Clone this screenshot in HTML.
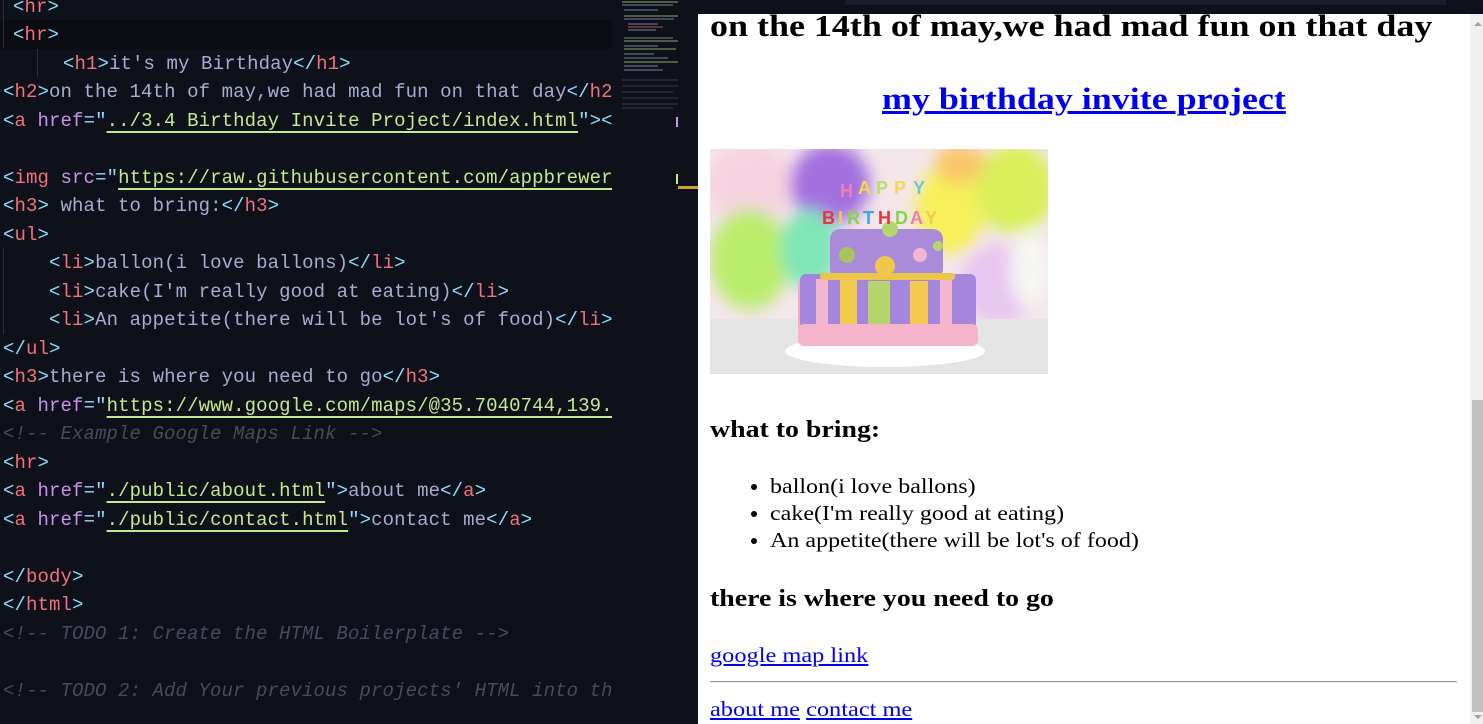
<!DOCTYPE html>
<html><head><meta charset="utf-8"><style>
*{margin:0;padding:0;box-sizing:border-box}
body{width:1483px;height:724px;overflow:hidden;background:#0f111a;position:relative;font-family:"Liberation Mono",monospace}
.l{position:absolute;left:3px;font-size:19px;letter-spacing:0.1px;line-height:28px;height:28px;color:#a6accd;white-space:pre}
.t{color:#f07178}.b{color:#89ddff}.a{color:#c792ea}.s{color:#c3e88d;text-decoration:underline;text-decoration-color:#c3e88d;text-underline-offset:5px;text-decoration-thickness:2px}
.c{color:#464b5d;font-style:italic}
#pv{position:absolute;left:698px;top:14px;width:772px;height:710px;background:#fff;font-family:"Liberation Serif",serif;color:#000;overflow:hidden}
#pv .p{position:absolute;white-space:nowrap}
.sx{transform:scaleX(1.16);transform-origin:0 0}
.sl{transform:scaleX(1.145);transform-origin:0 0;display:inline-block}
a{color:#0000ee}
</style></head><body>
<div style="position:absolute;left:0;top:20px;width:612px;height:29px;background:#0a0c12"></div>
<div style="position:absolute;left:3px;top:0;width:1px;height:48px;background:#2a2e3c"></div>
<div style="position:absolute;left:37px;top:49px;width:1px;height:28px;background:#2a2e3c"></div>
<div style="position:absolute;left:3px;top:248px;width:1px;height:86px;background:#2a2e3c"></div>
<div class="l" style="top:-7px;left:13px"><span class="b">&lt;</span><span class="t">hr</span><span class="b">&gt;</span></div>
<div class="l" style="top:21px;left:13px"><span class="b">&lt;</span><span class="t">hr</span><span class="b">&gt;</span></div>
<div class="l" style="top:50px;left:63px"><span class="b">&lt;</span><span class="t">h1</span><span class="b">&gt;</span>it's my Birthday<span class="b">&lt;/</span><span class="t">h1</span><span class="b">&gt;</span></div>
<div class="l" style="top:78px"><span class="b">&lt;</span><span class="t">h2</span><span class="b">&gt;</span>on the 14th of may,we had mad fun on that day<span class="b">&lt;/</span><span class="t">h2</span></div>
<div class="l" style="top:107px"><span class="b">&lt;</span><span class="t">a</span> <span class="a">href</span><span class="b">="</span><span class="s">../3.4 Birthday Invite Project/index.html</span><span class="b">"&gt;&lt;</span></div>
<div class="l" style="top:164px"><span class="b">&lt;</span><span class="t">img</span> <span class="a">src</span><span class="b">="</span><span class="s">https://raw.githubusercontent.com/appbrewer</span></div>
<div class="l" style="top:192px"><span class="b">&lt;</span><span class="t">h3</span><span class="b">&gt;</span> what to bring:<span class="b">&lt;/</span><span class="t">h3</span><span class="b">&gt;</span></div>
<div class="l" style="top:221px"><span class="b">&lt;</span><span class="t">ul</span><span class="b">&gt;</span></div>
<div class="l" style="top:249px">    <span class="b">&lt;</span><span class="t">li</span><span class="b">&gt;</span>ballon(i love ballons)<span class="b">&lt;/</span><span class="t">li</span><span class="b">&gt;</span></div>
<div class="l" style="top:278px">    <span class="b">&lt;</span><span class="t">li</span><span class="b">&gt;</span>cake(I'm really good at eating)<span class="b">&lt;/</span><span class="t">li</span><span class="b">&gt;</span></div>
<div class="l" style="top:306px">    <span class="b">&lt;</span><span class="t">li</span><span class="b">&gt;</span>An appetite(there will be lot's of food)<span class="b">&lt;/</span><span class="t">li</span><span class="b">&gt;</span></div>
<div class="l" style="top:335px"><span class="b">&lt;/</span><span class="t">ul</span><span class="b">&gt;</span></div>
<div class="l" style="top:363px"><span class="b">&lt;</span><span class="t">h3</span><span class="b">&gt;</span>there is where you need to go<span class="b">&lt;/</span><span class="t">h3</span><span class="b">&gt;</span></div>
<div class="l" style="top:392px"><span class="b">&lt;</span><span class="t">a</span> <span class="a">href</span><span class="b">="</span><span class="s">https://www.google.com/maps/@35.7040744,139.</span></div>
<div class="l c" style="top:420px">&lt;!-- Example Google Maps Link --&gt;</div>
<div class="l" style="top:449px"><span class="b">&lt;</span><span class="t">hr</span><span class="b">&gt;</span></div>
<div class="l" style="top:477px"><span class="b">&lt;</span><span class="t">a</span> <span class="a">href</span><span class="b">="</span><span class="s">./public/about.html</span><span class="b">"&gt;</span>about me<span class="b">&lt;/</span><span class="t">a</span><span class="b">&gt;</span></div>
<div class="l" style="top:506px"><span class="b">&lt;</span><span class="t">a</span> <span class="a">href</span><span class="b">="</span><span class="s">./public/contact.html</span><span class="b">"&gt;</span>contact me<span class="b">&lt;/</span><span class="t">a</span><span class="b">&gt;</span></div>
<div class="l" style="top:563px"><span class="b">&lt;/</span><span class="t">body</span><span class="b">&gt;</span></div>
<div class="l" style="top:591px"><span class="b">&lt;/</span><span class="t">html</span><span class="b">&gt;</span></div>
<div class="l c" style="top:620px">&lt;!-- TODO 1: Create the HTML Boilerplate --&gt;</div>
<div class="l c" style="top:677px;width:609px;overflow:hidden">&lt;!-- TODO 2: Add Your previous projects' HTML into th</div>
<div style="position:absolute;left:612px;top:0;width:86px;height:724px;background:#0f111a"></div>
<svg style="position:absolute;left:618px;top:0" width="80" height="200">
<g stroke-width="1" opacity=".7">
<line x1="4" y1="2" x2="60" y2="2" stroke="#c3e88d"/><line x1="4" y1="5" x2="55" y2="5" stroke="#a6accd"/>
<line x1="6" y1="10" x2="40" y2="10" stroke="#a6accd"/><line x1="6" y1="16" x2="60" y2="16" stroke="#c3e88d"/>
<line x1="6" y1="19" x2="56" y2="19" stroke="#a6accd"/><line x1="10" y1="24" x2="40" y2="24" stroke="#a6accd"/>
<line x1="10" y1="27" x2="45" y2="27" stroke="#f07178"/><line x1="10" y1="30" x2="38" y2="30" stroke="#a6accd"/>
<line x1="6" y1="38" x2="55" y2="38" stroke="#a6accd"/><line x1="6" y1="41" x2="60" y2="41" stroke="#c3e88d"/>
<line x1="6" y1="46" x2="40" y2="46" stroke="#a6accd"/><line x1="6" y1="49" x2="58" y2="49" stroke="#c3e88d"/>
<line x1="6" y1="54" x2="36" y2="54" stroke="#a6accd"/><line x1="6" y1="58" x2="50" y2="58" stroke="#a6accd"/>
<line x1="6" y1="62" x2="60" y2="62" stroke="#c3e88d"/><line x1="6" y1="66" x2="40" y2="66" stroke="#a6accd"/>
<line x1="6" y1="70" x2="45" y2="70" stroke="#a6accd"/><line x1="4" y1="80" x2="60" y2="80" stroke="#464b5d"/>
<line x1="4" y1="86" x2="60" y2="86" stroke="#464b5d"/><line x1="4" y1="92" x2="55" y2="92" stroke="#464b5d"/>
<line x1="4" y1="98" x2="60" y2="98" stroke="#464b5d"/><line x1="4" y1="104" x2="60" y2="104" stroke="#464b5d"/>
<line x1="4" y1="108" x2="55" y2="108" stroke="#464b5d"/></g>
<rect x="58" y="117" width="2" height="10" fill="#c792ea"/><rect x="58" y="174" width="2" height="10" fill="#c3e88d"/>
<rect x="60" y="186" width="20" height="3" fill="#c9a227"/></svg>
<div style="position:absolute;left:845px;top:0;width:601px;height:5px;background:#1b1e28"></div>
<div id="pv">
<div class="p sx" style="left:12px;top:-6px;font-size:31px;font-weight:bold">on the 14th of may,we had mad fun on that day</div>
<div class="p" style="left:184px;top:67px;font-size:31px;font-weight:bold;transform:scaleX(1.16);transform-origin:0 0"><a href="#">my birthday invite project</a></div>
<svg class="p" style="left:12px;top:135px" width="338" height="225" viewBox="0 0 338 225">
<defs><filter id="bl"><feGaussianBlur stdDeviation="8"/></filter></defs>
<rect width="338" height="225" fill="#f3e6ea"/>
<g filter="url(#bl)">
<ellipse cx="40" cy="35" rx="45" ry="40" fill="#f6d3e0"/>
<ellipse cx="120" cy="35" rx="40" ry="40" fill="#a36fe0"/>
<ellipse cx="40" cy="110" rx="40" ry="50" fill="#b9ec6a"/>
<ellipse cx="240" cy="60" rx="35" ry="45" fill="#f7f05a"/>
<ellipse cx="305" cy="40" rx="40" ry="45" fill="#d9f05a"/>
<ellipse cx="290" cy="135" rx="40" ry="40" fill="#e8c6f0"/>
<ellipse cx="100" cy="100" rx="30" ry="40" fill="#7fe6b8"/>
<ellipse cx="320" cy="120" rx="20" ry="40" fill="#f6f6f2"/>
<ellipse cx="250" cy="15" rx="25" ry="20" fill="#f9c56a"/>
</g>
<rect y="170" width="338" height="55" fill="#e4e4e4"/>
<ellipse cx="175" cy="202" rx="100" ry="16" fill="#fff"/>
<rect x="88" y="128" width="178" height="60" rx="8" fill="#f2acc6"/>
<rect x="90" y="125" width="176" height="55" rx="6" fill="#a487dc"/>
<rect x="130" y="130" width="17" height="50" fill="#f4c94f"/><rect x="158" y="132" width="22" height="50" fill="#b5d66d"/>
<rect x="200" y="132" width="18" height="50" fill="#f4c94f"/><rect x="106" y="130" width="12" height="48" fill="#f2b6cf"/><rect x="230" y="130" width="12" height="48" fill="#f2b6cf"/>
<rect x="88" y="175" width="180" height="22" rx="6" fill="#f5b4cc"/>
<rect x="120" y="80" width="113" height="50" rx="10" fill="#a98bd9"/>
<rect x="110" y="124" width="135" height="7" rx="3" fill="#eac64a"/>
<circle cx="137" cy="106" r="8" fill="#a9c361"/><circle cx="175" cy="117" r="10" fill="#eec84b"/><circle cx="210" cy="106" r="7" fill="#f3b5d3"/><circle cx="228" cy="97" r="5" fill="#b5d66d"/><circle cx="180" cy="80" r="8" fill="#b5d66d"/>
<g font-family="Liberation Sans,sans-serif" font-weight="bold" font-size="18">
<text x="130" y="48" fill="#f07cb8">H</text><text x="148" y="45" fill="#f6d84b">A</text><text x="166" y="45" fill="#b8e06a">P</text><text x="184" y="45" fill="#f6d84b">P</text><text x="203" y="45" fill="#6fc3ef">Y</text>
<text x="112" y="75" fill="#e8343c">B</text><text x="128" y="75" fill="#f4c94f">I</text><text x="137" y="75" fill="#86d34f">R</text><text x="153" y="75" fill="#39a7e8">T</text><text x="168" y="75" fill="#e8343c">H</text><text x="185" y="75" fill="#86d34f">D</text><text x="200" y="75" fill="#f07cb8">A</text><text x="215" y="75" fill="#f4c94f">Y</text></g>
</svg>
<div class="p sx" style="left:12px;top:403px;font-size:24px;font-weight:bold">what to bring:</div>
<ul class="p" style="left:50px;top:459px;font-size:21px;line-height:27px;list-style:disc;padding-left:22px">
<li><span class="sl">ballon(i love ballons)</span></li><li><span class="sl">cake(I'm really good at eating)</span></li><li><span class="sl">An appetite(there will be lot's of food)</span></li></ul>
<div class="p sx" style="left:12px;top:572px;font-size:24px;font-weight:bold">there is where you need to go</div>
<div class="p sx" style="left:12px;top:629px;font-size:21px"><a href="#">google map link</a></div>
<div class="p" style="left:12px;top:667px;width:747px;height:2px;border-top:1px solid #9a9a9a;border-bottom:1px solid #eee"></div>
<div class="p sx" style="left:12px;top:683px;font-size:21px"><a href="#">about me</a> <a href="#">contact me</a></div>
</div>
<div style="position:absolute;left:1470px;top:14px;width:13px;height:710px;background:#f0f0f0"></div>
<div style="position:absolute;left:1472px;top:400px;width:11px;height:312px;background:#c1c1c1"></div>
<div style="position:absolute;left:1474px;top:22px;width:0;height:0;border-left:4px solid transparent;border-right:4px solid transparent;border-bottom:4px solid #a0a0a0"></div>
<div style="position:absolute;left:1474px;top:715px;width:0;height:0;border-left:4px solid transparent;border-right:4px solid transparent;border-top:4px solid #a0a0a0"></div>
</body></html>
